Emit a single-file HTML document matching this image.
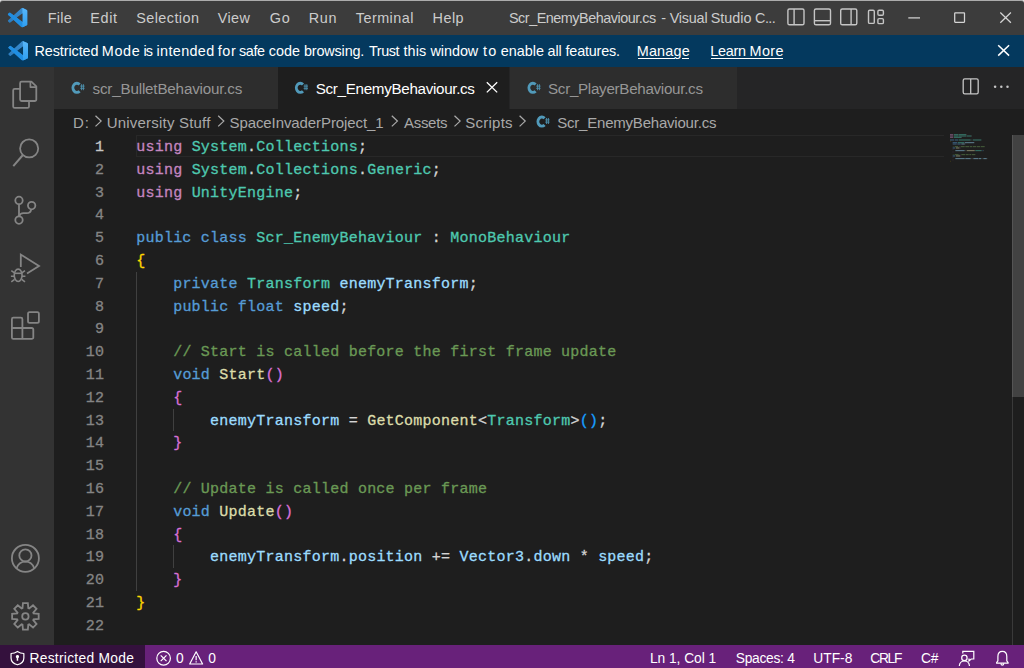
<!DOCTYPE html><html><head><meta charset="utf-8"><title>VS Code</title>
<style>
*{margin:0;padding:0;box-sizing:border-box}
html,body{width:1024px;height:668px;overflow:hidden;background:#1e1e1e}
body{position:relative;font-family:"Liberation Sans",sans-serif}
.a{position:absolute}
.t{position:absolute;white-space:pre;font-family:"Liberation Sans",sans-serif}
.c{position:absolute;white-space:pre;font-family:"Liberation Mono",monospace;color:#d4d4d4;-webkit-text-stroke:0.3px}
.c i{font-style:normal}
svg{position:absolute;overflow:visible}

</style></head><body>
<!-- title bar -->
<div class="a" style="left:0;top:0;width:1024px;height:4px;background:#e4e4e4"></div>
<div class="a" style="left:0;top:0;width:1024px;height:35.3px;background:#3c3c3c;border-top:1px solid #acacac;border-radius:3px 3px 0 0"></div>
<!-- banner -->
<div class="a" style="left:0;top:35.3px;width:1024px;height:31.3px;background:#04395e"></div>
<!-- activity bar -->
<div class="a" style="left:0;top:66.6px;width:54px;height:578.2px;background:#333333"></div>
<!-- tab strip -->
<div class="a" style="left:54px;top:66.6px;width:970px;height:42.2px;background:#252526"></div>
<div class="a" style="left:54px;top:66.6px;width:223.5px;height:42.2px;background:#2d2d2d"></div>
<div class="a" style="left:278.2px;top:66.6px;width:231.3px;height:42.2px;background:#1e1e1e"></div>
<div class="a" style="left:510.2px;top:66.6px;width:226.8px;height:42.2px;background:#2d2d2d"></div>
<!-- current line highlight -->
<div class="a" style="left:136.2px;top:135.2px;width:808px;height:22px;border:1.8px solid #282828;border-right:0"></div>
<!-- indent guides -->
<div class="a" style="left:136.2px;top:271.8px;width:1px;height:319.2px;background:#404040"></div>
<div class="a" style="left:173.2px;top:408.6px;width:1px;height:22.8px;background:#404040"></div>
<div class="a" style="left:173.2px;top:545.4px;width:1px;height:22.8px;background:#404040"></div>
<!-- scrollbar -->
<div class="a" style="left:1012.2px;top:134.8px;width:11.8px;height:262.4px;background:#424242"></div>
<div class="a" style="left:1012px;top:134.8px;width:1px;height:510px;background:rgba(127,127,127,0.3)"></div>
<!-- status bar -->
<div class="a" style="left:0;top:644.8px;width:1024px;height:23.2px;background:#68217a"></div>
<div class="a" style="left:0;top:644.8px;width:145px;height:23.2px;background:#34113d"></div>
<!-- underlines -->
<div class="a" style="left:638px;top:57.8px;width:36.6px;height:1.3px;background:#fff"></div>
<div class="a" style="left:681.6px;top:57.8px;width:7.4px;height:1.3px;background:#fff"></div>
<div class="a" style="left:711.4px;top:57.8px;width:71.6px;height:1.3px;background:#fff"></div>

<svg width="1024" height="668" viewBox="0 0 1024 668" style="left:0;top:0">
<g transform="translate(7.90 7.80) scale(0.8167)"><defs><clipPath id="g1c"><path d="M23.15 2.587L18.21.21a1.494 1.494 0 0 0-1.705.29l-9.46 8.63-4.12-3.128a.999.999 0 0 0-1.276.057L.327 7.261A1 1 0 0 0 .326 8.74L3.899 12 .326 15.26a1 1 0 0 0 .001 1.479L1.65 17.94a.999.999 0 0 0 1.276.057l4.12-3.128 9.46 8.63a1.492 1.492 0 0 0 1.704.29l4.942-2.377A1.5 1.5 0 0 0 24 20.06V3.939a1.5 1.5 0 0 0-.85-1.352zm-5.146 14.861L10.826 12l7.178-5.448v10.896z"/></clipPath><linearGradient id="g1w" x1="0" y1="0" x2="0" y2="1"><stop offset="0" stop-color="#5ab8fb"/><stop offset="1" stop-color="#2c9df0"/></linearGradient><linearGradient id="g1d" x1="1" y1="0" x2="0" y2="1"><stop offset="0" stop-color="#3a8ed2"/><stop offset="1" stop-color="#2a78b8"/></linearGradient></defs><g clip-path="url(#g1c)"><rect x="-1" y="-1" width="26" height="26" fill="url(#g1d)"/><path fill="#1f8ee2" d="M-0.5 7.6L1.4 6.0L2.9 5.7L18.4 17.6V25H16.6L3.9 12L-0.5 8.9Z"/><path fill="url(#g1w)" d="M17.75 -1H25V25H17.75Z"/></g></g>
<g transform="translate(8.40 41.00) scale(0.8167)"><defs><clipPath id="g2c"><path d="M23.15 2.587L18.21.21a1.494 1.494 0 0 0-1.705.29l-9.46 8.63-4.12-3.128a.999.999 0 0 0-1.276.057L.327 7.261A1 1 0 0 0 .326 8.74L3.899 12 .326 15.26a1 1 0 0 0 .001 1.479L1.65 17.94a.999.999 0 0 0 1.276.057l4.12-3.128 9.46 8.63a1.492 1.492 0 0 0 1.704.29l4.942-2.377A1.5 1.5 0 0 0 24 20.06V3.939a1.5 1.5 0 0 0-.85-1.352zm-5.146 14.861L10.826 12l7.178-5.448v10.896z"/></clipPath><linearGradient id="g2w" x1="0" y1="0" x2="0" y2="1"><stop offset="0" stop-color="#5ab8fb"/><stop offset="1" stop-color="#2c9df0"/></linearGradient><linearGradient id="g2d" x1="1" y1="0" x2="0" y2="1"><stop offset="0" stop-color="#3a8ed2"/><stop offset="1" stop-color="#2a78b8"/></linearGradient></defs><g clip-path="url(#g2c)"><rect x="-1" y="-1" width="26" height="26" fill="url(#g2d)"/><path fill="#1f8ee2" d="M-0.5 7.6L1.4 6.0L2.9 5.7L18.4 17.6V25H16.6L3.9 12L-0.5 8.9Z"/><path fill="url(#g2w)" d="M17.75 -1H25V25H17.75Z"/></g></g>
<g fill="none" stroke="#c5c5c5" stroke-width="1.4">
<rect x="787.9" y="9" width="16.1" height="15.8" rx="1.6"/><path d="M794.1 9v15.8"/>
<rect x="814.4" y="9" width="16.1" height="15.8" rx="1.6"/><path d="M814.4 20.7h16.1"/>
<rect x="840.7" y="9" width="16.1" height="15.8" rx="1.6"/><path d="M851.1 9v15.8"/>
<rect x="868.5" y="10.2" width="5.8" height="13.2" rx="1.2"/><rect x="877.9" y="10.2" width="5.5" height="5" rx="1.2"/><rect x="877.9" y="18.6" width="5.5" height="5" rx="1.2"/>
</g>
<g fill="none" stroke="#d4d4d4" stroke-width="1.25">
<path d="M908.3 17.9h11.7"/>
<rect x="954.7" y="12.8" width="9.8" height="9.5" rx="0.5"/>
<path d="M1000.3 12.5l10.6 10.3M1010.9 12.5l-10.6 10.3"/>
</g>
<path d="M998.2 45.3l10.9 10.3M1009.1 45.3l-10.9 10.3" fill="none" stroke="#ffffff" stroke-width="1.5"/>
<g fill="none" stroke="#858585" stroke-width="1.8" stroke-linejoin="round">
<path d="M21.6 81.7H31.4L36.3 86.4V99.5a1.5 1.5 0 0 1 -1.5 1.5H21.6a1.5 1.5 0 0 1 -1.5 -1.5V83.2a1.5 1.5 0 0 1 1.5 -1.5Z"/>
<path d="M30.4 82v5.1h5.6" stroke-width="1.7"/>
<path d="M20.1 88.8H14.7a1.5 1.5 0 0 0 -1.5 1.5V106.4a1.5 1.5 0 0 0 1.5 1.5H27.5a1.5 1.5 0 0 0 1.5 -1.5V101"/>
<circle cx="29.15" cy="148.4" r="9.05"/><path d="M22.9 155l-9.6 11.1" stroke-width="2"/>
<circle cx="19" cy="200.4" r="3.7"/><circle cx="19" cy="220.1" r="3.7"/><circle cx="31.65" cy="205.6" r="3.7"/>
<path d="M19 204.1V216.4"/><path d="M31.2 209.3c-0.4 2.6 -2.2 3.9 -4.6 3.9H23.5c-2.2 0 -3.7 1 -4.3 3"/>
<path d="M20.8 267V254.6L39 266.1L27 273.6" stroke-linejoin="miter" stroke-width="1.8"/>
<g stroke-width="1.6"><ellipse cx="18.15" cy="275.3" rx="3.9" ry="6.2"/><path d="M14.6 273.3h7.1"/>
<path d="M11.3 270.6l3.2 2.2M10.9 276.3h3.5M11.3 281.9l3.3 -2.5M25 270.6l-3.2 2.2M25.4 276.3h-3.5M25 281.9l-3.3 -2.5"/></g>
<path d="M13.4 317.7H20.9a1.5 1.5 0 0 1 1.5 1.5V328H31.8a1.5 1.5 0 0 1 1.5 1.5V337.4a1.5 1.5 0 0 1 -1.5 1.5H13.4a1.5 1.5 0 0 1 -1.5 -1.5V319.2a1.5 1.5 0 0 1 1.5 -1.5ZM22.4 328V338.9M11.9 328H22.4"/>
<rect x="28" y="312.2" width="10.9" height="10.6" rx="1.6"/>
<circle cx="25.4" cy="558.3" r="13.5"/><circle cx="25.4" cy="555.4" r="6.1"/>
<path d="M16.6 568.2c1.4 -4 4.8 -6.6 8.8 -6.6s7.4 2.6 8.8 6.6"/>
<path d="M22.50 608.20 L22.94 603.13 L27.86 603.13 L28.30 608.20 L29.15 608.55 L33.05 605.27 L36.53 608.75 L33.25 612.65 L33.60 613.50 L38.67 613.94 L38.67 618.86 L33.60 619.30 L33.25 620.15 L36.53 624.05 L33.05 627.53 L29.15 624.25 L28.30 624.60 L27.86 629.67 L22.94 629.67 L22.50 624.60 L21.65 624.25 L17.75 627.53 L14.27 624.05 L17.55 620.15 L17.20 619.30 L12.13 618.86 L12.13 613.94 L17.20 613.50 L17.55 612.65 L14.27 608.75 L17.75 605.27 L21.65 608.55Z" stroke-linejoin="miter"/><circle cx="25.4" cy="616.4" r="3.2"/>
</g>
<path d="M79.60 84.40 A4.0 4.55 0 1 0 79.60 91.20" fill="none" stroke="#519aba" stroke-width="2.9"/><g stroke="#519aba" stroke-width="0.9" opacity="0.95"><path d="M81.60 84.20 v6 M83.40 84.20 v6 M80.20 86.10 h4.4 M80.20 88.30 h4.4"/></g>
<path d="M303.00 84.40 A4.0 4.55 0 1 0 303.00 91.20" fill="none" stroke="#519aba" stroke-width="2.9"/><g stroke="#519aba" stroke-width="0.9" opacity="0.95"><path d="M305.00 84.20 v6 M306.80 84.20 v6 M303.60 86.10 h4.4 M303.60 88.30 h4.4"/></g>
<path d="M535.60 84.40 A4.0 4.55 0 1 0 535.60 91.20" fill="none" stroke="#519aba" stroke-width="2.9"/><g stroke="#519aba" stroke-width="0.9" opacity="0.95"><path d="M537.60 84.20 v6 M539.40 84.20 v6 M536.20 86.10 h4.4 M536.20 88.30 h4.4"/></g>
<path d="M544.60 118.20 A4.0 4.55 0 1 0 544.60 125.00" fill="none" stroke="#519aba" stroke-width="2.9"/><g stroke="#519aba" stroke-width="0.9" opacity="0.95"><path d="M546.60 118.00 v6 M548.40 118.00 v6 M545.20 119.90 h4.4 M545.20 122.10 h4.4"/></g>
<path d="M486.8 82.2l10.4 10.2M497.2 82.2l-10.4 10.2" fill="none" stroke="#ffffff" stroke-width="1.3"/>
<g fill="none" stroke="#c5c5c5" stroke-width="1.3"><rect x="963.2" y="78.9" width="15" height="15" rx="1.6"/><path d="M970.7 78.9v15"/></g>
<g fill="#c5c5c5"><circle cx="995.1" cy="86.8" r="1.25"/><circle cx="1001.3" cy="86.8" r="1.25"/><circle cx="1007.5" cy="86.8" r="1.25"/></g>
<path d="M95.50 115.80 l5.6 5.3 l-5.6 5.3" fill="none" stroke="#a9a9a9" stroke-width="1.25"/>
<path d="M218.20 115.80 l5.6 5.3 l-5.6 5.3" fill="none" stroke="#a9a9a9" stroke-width="1.25"/>
<path d="M391.80 115.80 l5.6 5.3 l-5.6 5.3" fill="none" stroke="#a9a9a9" stroke-width="1.25"/>
<path d="M454.50 115.80 l5.6 5.3 l-5.6 5.3" fill="none" stroke="#a9a9a9" stroke-width="1.25"/>
<path d="M519.60 115.80 l5.6 5.3 l-5.6 5.3" fill="none" stroke="#a9a9a9" stroke-width="1.25"/>
<g fill="none" stroke="#ffffff" stroke-width="1.2" stroke-linejoin="round">
<path d="M17.45 651.4c-1.9 1.3 -4 2 -6.4 2.1v4.4c0 3.4 2.4 5.7 6.4 6.9c4 -1.2 6.4 -3.5 6.4 -6.9v-4.4c-2.4 -0.1 -4.5 -0.8 -6.4 -2.1Z"/>
</g>
<path d="M17.45 655a1.7 1.7 0 0 1 0.75 3.2v2.6h-1.5v-2.6a1.7 1.7 0 0 1 0.75 -3.2Z" fill="#fff"/>
<g fill="none" stroke="#ffffff" stroke-width="1.2">
<circle cx="163.6" cy="658.25" r="6.8"/><path d="M160.7 655.3l5.8 5.9M166.5 655.3l-5.8 5.9"/>
<path d="M196.15 651.8L202.6 664H189.7Z" stroke-linejoin="round"/><path d="M196.15 656v4.3M196.15 661.3v1.3"/>
<circle cx="964.4" cy="657.9" r="2.7"/><path d="M959.3 666c0.3 -3.2 2.2 -5 5.1 -5s4.8 1.8 5.1 5"/>
<path d="M962.8 653.6V651.4h11v7.6h-2.6l-2.2 2v-2h-0.6" stroke-linejoin="miter"/>
<path d="M996.6 663.2h11.5v-0.7l-1.3 -1.7v-4.2c0 -3.1 -1.9 -5.2 -4.45 -5.2s-4.45 2.1 -4.45 5.2v4.2l-1.3 1.7Z" stroke-linejoin="round"/><path d="M1000.9 663.4c0.1 1.2 0.6 1.8 1.45 1.8s1.35 -0.6 1.45 -1.8"/>
</g>
</svg>
<div class="a" style="left:0;top:0;opacity:0.5"><svg width="80" height="40" viewBox="0 0 80 40" style="left:949.8px;top:134.4px" shape-rendering="auto"><rect x="0.00" y="0.15" width="3.33" height="1.05" fill="#c586c0"/><rect x="4.00" y="0.15" width="4.00" height="1.05" fill="#4ec9b0"/><rect x="8.00" y="0.15" width="0.67" height="1.05" fill="#d4d4d4" opacity="0.4"/><rect x="8.67" y="0.15" width="7.34" height="1.05" fill="#4ec9b0"/><rect x="16.01" y="0.15" width="0.67" height="1.05" fill="#d4d4d4" opacity="0.4"/><rect x="0.00" y="1.48" width="3.33" height="1.05" fill="#c586c0"/><rect x="4.00" y="1.48" width="4.00" height="1.05" fill="#4ec9b0"/><rect x="8.00" y="1.48" width="0.67" height="1.05" fill="#d4d4d4" opacity="0.4"/><rect x="8.67" y="1.48" width="7.34" height="1.05" fill="#4ec9b0"/><rect x="16.01" y="1.48" width="0.67" height="1.05" fill="#d4d4d4" opacity="0.4"/><rect x="16.68" y="1.48" width="4.67" height="1.05" fill="#4ec9b0"/><rect x="21.34" y="1.48" width="0.67" height="1.05" fill="#d4d4d4" opacity="0.4"/><rect x="0.00" y="2.81" width="3.33" height="1.05" fill="#c586c0"/><rect x="4.00" y="2.81" width="7.34" height="1.05" fill="#4ec9b0"/><rect x="11.34" y="2.81" width="0.67" height="1.05" fill="#d4d4d4" opacity="0.4"/><rect x="0.00" y="5.47" width="4.00" height="1.05" fill="#569cd6"/><rect x="4.67" y="5.47" width="3.33" height="1.05" fill="#569cd6"/><rect x="8.67" y="5.47" width="12.01" height="1.05" fill="#4ec9b0"/><rect x="21.34" y="5.47" width="0.67" height="1.05" fill="#d4d4d4" opacity="0.4"/><rect x="22.68" y="5.47" width="8.67" height="1.05" fill="#4ec9b0"/><rect x="0.00" y="6.80" width="0.67" height="1.05" fill="#ffd700" opacity="0.4"/><rect x="2.67" y="8.13" width="4.67" height="1.05" fill="#569cd6"/><rect x="8.00" y="8.13" width="6.00" height="1.05" fill="#4ec9b0"/><rect x="14.67" y="8.13" width="9.34" height="1.05" fill="#9cdcfe"/><rect x="24.01" y="8.13" width="0.67" height="1.05" fill="#d4d4d4" opacity="0.4"/><rect x="2.67" y="9.46" width="4.00" height="1.05" fill="#569cd6"/><rect x="7.34" y="9.46" width="3.33" height="1.05" fill="#569cd6"/><rect x="11.34" y="9.46" width="3.33" height="1.05" fill="#9cdcfe"/><rect x="14.67" y="9.46" width="0.67" height="1.05" fill="#d4d4d4" opacity="0.4"/><rect x="2.67" y="12.12" width="1.33" height="1.05" fill="#6a9955" opacity="0.4"/><rect x="4.67" y="12.12" width="3.33" height="1.05" fill="#6a9955"/><rect x="8.67" y="12.12" width="1.33" height="1.05" fill="#6a9955" opacity="0.4"/><rect x="10.67" y="12.12" width="4.00" height="1.05" fill="#6a9955"/><rect x="15.34" y="12.12" width="4.00" height="1.05" fill="#6a9955"/><rect x="20.01" y="12.12" width="2.00" height="1.05" fill="#6a9955"/><rect x="22.68" y="12.12" width="3.33" height="1.05" fill="#6a9955"/><rect x="26.68" y="12.12" width="3.33" height="1.05" fill="#6a9955"/><rect x="30.68" y="12.12" width="4.00" height="1.05" fill="#6a9955"/><rect x="2.67" y="13.45" width="2.67" height="1.05" fill="#569cd6"/><rect x="6.00" y="13.45" width="3.33" height="1.05" fill="#dcdcaa"/><rect x="9.34" y="13.45" width="1.33" height="1.05" fill="#da70d6" opacity="0.4"/><rect x="2.67" y="14.78" width="0.67" height="1.05" fill="#da70d6" opacity="0.4"/><rect x="5.34" y="16.11" width="9.34" height="1.05" fill="#9cdcfe"/><rect x="15.34" y="16.11" width="0.67" height="1.05" fill="#d4d4d4" opacity="0.4"/><rect x="16.68" y="16.11" width="8.00" height="1.05" fill="#dcdcaa"/><rect x="24.68" y="16.11" width="0.67" height="1.05" fill="#d4d4d4" opacity="0.4"/><rect x="25.35" y="16.11" width="6.00" height="1.05" fill="#4ec9b0"/><rect x="31.35" y="16.11" width="0.67" height="1.05" fill="#d4d4d4" opacity="0.4"/><rect x="32.02" y="16.11" width="1.33" height="1.05" fill="#179fff" opacity="0.4"/><rect x="33.35" y="16.11" width="0.67" height="1.05" fill="#d4d4d4" opacity="0.4"/><rect x="2.67" y="17.44" width="0.67" height="1.05" fill="#da70d6" opacity="0.4"/><rect x="2.67" y="20.10" width="1.33" height="1.05" fill="#6a9955" opacity="0.4"/><rect x="4.67" y="20.10" width="4.00" height="1.05" fill="#6a9955"/><rect x="9.34" y="20.10" width="1.33" height="1.05" fill="#6a9955" opacity="0.4"/><rect x="11.34" y="20.10" width="4.00" height="1.05" fill="#6a9955"/><rect x="16.01" y="20.10" width="2.67" height="1.05" fill="#6a9955"/><rect x="19.34" y="20.10" width="2.00" height="1.05" fill="#6a9955"/><rect x="22.01" y="20.10" width="3.33" height="1.05" fill="#6a9955"/><rect x="2.67" y="21.43" width="2.67" height="1.05" fill="#569cd6"/><rect x="6.00" y="21.43" width="4.00" height="1.05" fill="#dcdcaa"/><rect x="10.01" y="21.43" width="1.33" height="1.05" fill="#da70d6" opacity="0.4"/><rect x="2.67" y="22.76" width="0.67" height="1.05" fill="#da70d6" opacity="0.4"/><rect x="5.34" y="24.09" width="9.34" height="1.05" fill="#9cdcfe"/><rect x="14.67" y="24.09" width="0.67" height="1.05" fill="#d4d4d4" opacity="0.4"/><rect x="15.34" y="24.09" width="5.34" height="1.05" fill="#9cdcfe"/><rect x="21.34" y="24.09" width="1.33" height="1.05" fill="#d4d4d4" opacity="0.4"/><rect x="23.35" y="24.09" width="4.67" height="1.05" fill="#9cdcfe"/><rect x="28.01" y="24.09" width="0.67" height="1.05" fill="#d4d4d4" opacity="0.4"/><rect x="28.68" y="24.09" width="2.67" height="1.05" fill="#9cdcfe"/><rect x="32.02" y="24.09" width="0.67" height="1.05" fill="#d4d4d4" opacity="0.4"/><rect x="33.35" y="24.09" width="3.33" height="1.05" fill="#9cdcfe"/><rect x="36.69" y="24.09" width="0.67" height="1.05" fill="#d4d4d4" opacity="0.4"/><rect x="2.67" y="25.42" width="0.67" height="1.05" fill="#da70d6" opacity="0.4"/><rect x="0.00" y="26.75" width="0.67" height="1.05" fill="#ffd700" opacity="0.4"/></svg></div>
<span class="t" id="t0" style="left:47.75px;top:11.11px;font-size:14.4px;line-height:14.4px;color:#cccccc;letter-spacing:0.250px;">File</span>
<span class="t" id="t1" style="left:90.25px;top:11.11px;font-size:14.4px;line-height:14.4px;color:#cccccc;letter-spacing:0.667px;">Edit</span>
<span class="t" id="t2" style="left:136.25px;top:11.11px;font-size:14.4px;line-height:14.4px;color:#cccccc;letter-spacing:0.438px;">Selection</span>
<span class="t" id="t3" style="left:217.75px;top:11.11px;font-size:14.4px;line-height:14.4px;color:#cccccc;letter-spacing:0.417px;">View</span>
<span class="t" id="t4" style="left:269.75px;top:11.11px;font-size:14.4px;line-height:14.4px;color:#cccccc;letter-spacing:0.750px;">Go</span>
<span class="t" id="t5" style="left:308.75px;top:11.11px;font-size:14.4px;line-height:14.4px;color:#cccccc;letter-spacing:0.625px;">Run</span>
<span class="t" id="t6" style="left:355.75px;top:11.11px;font-size:14.4px;line-height:14.4px;color:#cccccc;letter-spacing:0.464px;">Terminal</span>
<span class="t" id="t7" style="left:432.50px;top:11.11px;font-size:14.4px;line-height:14.4px;color:#cccccc;letter-spacing:0.500px;">Help</span>
<span class="t" id="t8" style="left:509.00px;top:11.11px;font-size:14.4px;line-height:14.4px;color:#cccccc;letter-spacing:-0.478px;">Scr_EnemyBehaviour.cs</span>
<span class="t" id="t9" style="left:661.30px;top:11.11px;font-size:14.4px;line-height:14.4px;color:#cccccc;letter-spacing:0.000px;">-</span>
<span class="t" id="t10" style="left:669.75px;top:11.11px;font-size:14.4px;line-height:14.4px;color:#cccccc;letter-spacing:-0.220px;">Visual</span>
<span class="t" id="t11" style="left:710.75px;top:11.11px;font-size:14.4px;line-height:14.4px;color:#cccccc;letter-spacing:0.000px;">Studio</span>
<span class="t" id="t12" style="left:755.00px;top:11.11px;font-size:14.4px;line-height:14.4px;color:#cccccc;letter-spacing:-0.517px;">C...</span>
<span class="t" id="t13" style="left:34.50px;top:44.21px;font-size:14.4px;line-height:14.4px;color:#ffffff;letter-spacing:-0.083px;">Restricted</span>
<span class="t" id="t14" style="left:101.75px;top:44.21px;font-size:14.4px;line-height:14.4px;color:#ffffff;letter-spacing:0.667px;">Mode</span>
<span class="t" id="t15" style="left:143.50px;top:44.21px;font-size:14.4px;line-height:14.4px;color:#ffffff;letter-spacing:-1.000px;">is</span>
<span class="t" id="t16" style="left:156.50px;top:44.21px;font-size:14.4px;line-height:14.4px;color:#ffffff;letter-spacing:0.357px;">intended</span>
<span class="t" id="t17" style="left:217.75px;top:44.21px;font-size:14.4px;line-height:14.4px;color:#ffffff;letter-spacing:0.625px;">for</span>
<span class="t" id="t18" style="left:239.00px;top:44.21px;font-size:14.4px;line-height:14.4px;color:#ffffff;letter-spacing:-0.383px;">safe</span>
<span class="t" id="t19" style="left:268.75px;top:44.21px;font-size:14.4px;line-height:14.4px;color:#ffffff;letter-spacing:0.000px;">code</span>
<span class="t" id="t20" style="left:304.00px;top:44.21px;font-size:14.4px;line-height:14.4px;color:#ffffff;letter-spacing:-0.156px;">browsing.</span>
<span class="t" id="t21" style="left:369.00px;top:44.21px;font-size:14.4px;line-height:14.4px;color:#ffffff;letter-spacing:-0.438px;">Trust</span>
<span class="t" id="t22" style="left:403.50px;top:44.21px;font-size:14.4px;line-height:14.4px;color:#ffffff;letter-spacing:0.083px;">this</span>
<span class="t" id="t23" style="left:430.50px;top:44.21px;font-size:14.4px;line-height:14.4px;color:#ffffff;letter-spacing:-0.050px;">window</span>
<span class="t" id="t24" style="left:483.00px;top:44.21px;font-size:14.4px;line-height:14.4px;color:#ffffff;letter-spacing:1.250px;">to</span>
<span class="t" id="t25" style="left:500.75px;top:44.21px;font-size:14.4px;line-height:14.4px;color:#ffffff;letter-spacing:0.000px;">enable</span>
<span class="t" id="t26" style="left:547.50px;top:44.21px;font-size:14.4px;line-height:14.4px;color:#ffffff;letter-spacing:-0.125px;">all</span>
<span class="t" id="t27" style="left:565.50px;top:44.21px;font-size:14.4px;line-height:14.4px;color:#ffffff;letter-spacing:-0.188px;">features.</span>
<span class="t" id="t28" style="left:636.75px;top:44.21px;font-size:14.4px;line-height:14.4px;color:#ffffff;letter-spacing:0.180px;">Manage</span>
<span class="t" id="t29" style="left:710.25px;top:44.21px;font-size:14.4px;line-height:14.4px;color:#ffffff;letter-spacing:-0.275px;">Learn</span>
<span class="t" id="t30" style="left:749.50px;top:44.21px;font-size:14.4px;line-height:14.4px;color:#ffffff;letter-spacing:0.400px;">More</span>
<span class="t" id="t31" style="left:92.50px;top:80.53px;font-size:15.2px;line-height:15.2px;color:#969696;letter-spacing:-0.179px;">scr_BulletBehaviour.cs</span>
<span class="t" id="t32" style="left:315.75px;top:80.53px;font-size:15.2px;line-height:15.2px;color:#ffffff;letter-spacing:-0.312px;">Scr_EnemyBehaviour.cs</span>
<span class="t" id="t33" style="left:548.00px;top:80.53px;font-size:15.2px;line-height:15.2px;color:#969696;letter-spacing:-0.298px;">Scr_PlayerBehaviour.cs</span>
<span class="t" id="t34" style="left:73.00px;top:114.90px;font-size:15px;line-height:15px;color:#a9a9a9;letter-spacing:1.000px;">D:</span>
<span class="t" id="t35" style="left:106.75px;top:114.90px;font-size:15px;line-height:15px;color:#a9a9a9;letter-spacing:0.200px;">University Stuff</span>
<span class="t" id="t36" style="left:229.50px;top:114.90px;font-size:15px;line-height:15px;color:#a9a9a9;letter-spacing:-0.087px;">SpaceInvaderProject_1</span>
<span class="t" id="t37" style="left:404.00px;top:114.90px;font-size:15px;line-height:15px;color:#a9a9a9;letter-spacing:-0.300px;">Assets</span>
<span class="t" id="t38" style="left:465.25px;top:114.90px;font-size:15px;line-height:15px;color:#a9a9a9;letter-spacing:0.250px;">Scripts</span>
<span class="t" id="t39" style="left:557.25px;top:114.90px;font-size:15px;line-height:15px;color:#a9a9a9;letter-spacing:-0.212px;">Scr_EnemyBehaviour.cs</span>
<span class="t" id="t40" style="left:29.50px;top:651.62px;font-size:13.8px;line-height:13.8px;color:#ffffff;letter-spacing:0.275px;">Restricted Mode</span>
<span class="t" id="t41" style="left:175.88px;top:651.62px;font-size:13.8px;line-height:13.8px;color:#ffffff;letter-spacing:0.000px;">0</span>
<span class="t" id="t42" style="left:208.25px;top:651.62px;font-size:13.8px;line-height:13.8px;color:#ffffff;letter-spacing:0.000px;">0</span>
<span class="t" id="t43" style="left:650.00px;top:651.62px;font-size:13.8px;line-height:13.8px;color:#ffffff;letter-spacing:-0.060px;">Ln 1, Col 1</span>
<span class="t" id="t44" style="left:735.75px;top:651.62px;font-size:13.8px;line-height:13.8px;color:#ffffff;letter-spacing:-0.281px;">Spaces: 4</span>
<span class="t" id="t45" style="left:813.25px;top:651.62px;font-size:13.8px;line-height:13.8px;color:#ffffff;letter-spacing:0.000px;">UTF-8</span>
<span class="t" id="t46" style="left:870.25px;top:651.62px;font-size:13.8px;line-height:13.8px;color:#ffffff;letter-spacing:-1.283px;">CRLF</span>
<span class="t" id="t47" style="left:921.00px;top:651.62px;font-size:13.8px;line-height:13.8px;color:#ffffff;letter-spacing:-0.150px;">C#</span>
<span class="c" style="left:95.06px;top:140.00px;font-size:15.0px;line-height:15.0px;letter-spacing:0.236px;color:#c6c6c6">1</span>
<span class="c" style="left:136.20px;top:140.00px;font-size:15.0px;line-height:15.0px;letter-spacing:0.236px"><i style="color:#c586c0">using</i><i style="color:#d4d4d4"> </i><i style="color:#4ec9b0">System</i><i style="color:#d4d4d4">.</i><i style="color:#4ec9b0">Collections</i><i style="color:#d4d4d4">;</i></span>
<span class="c" style="left:95.06px;top:162.80px;font-size:15.0px;line-height:15.0px;letter-spacing:0.236px;color:#858585">2</span>
<span class="c" style="left:136.20px;top:162.80px;font-size:15.0px;line-height:15.0px;letter-spacing:0.236px"><i style="color:#c586c0">using</i><i style="color:#d4d4d4"> </i><i style="color:#4ec9b0">System</i><i style="color:#d4d4d4">.</i><i style="color:#4ec9b0">Collections</i><i style="color:#d4d4d4">.</i><i style="color:#4ec9b0">Generic</i><i style="color:#d4d4d4">;</i></span>
<span class="c" style="left:95.06px;top:185.60px;font-size:15.0px;line-height:15.0px;letter-spacing:0.236px;color:#858585">3</span>
<span class="c" style="left:136.20px;top:185.60px;font-size:15.0px;line-height:15.0px;letter-spacing:0.236px"><i style="color:#c586c0">using</i><i style="color:#d4d4d4"> </i><i style="color:#4ec9b0">UnityEngine</i><i style="color:#d4d4d4">;</i></span>
<span class="c" style="left:95.06px;top:208.40px;font-size:15.0px;line-height:15.0px;letter-spacing:0.236px;color:#858585">4</span>
<span class="c" style="left:95.06px;top:231.20px;font-size:15.0px;line-height:15.0px;letter-spacing:0.236px;color:#858585">5</span>
<span class="c" style="left:136.20px;top:231.20px;font-size:15.0px;line-height:15.0px;letter-spacing:0.236px"><i style="color:#569cd6">public class </i><i style="color:#4ec9b0">Scr_EnemyBehaviour</i><i style="color:#d4d4d4"> : </i><i style="color:#4ec9b0">MonoBehaviour</i></span>
<span class="c" style="left:95.06px;top:254.00px;font-size:15.0px;line-height:15.0px;letter-spacing:0.236px;color:#858585">6</span>
<span class="c" style="left:136.20px;top:254.00px;font-size:15.0px;line-height:15.0px;letter-spacing:0.236px"><i style="color:#ffd700">{</i></span>
<span class="c" style="left:95.06px;top:276.80px;font-size:15.0px;line-height:15.0px;letter-spacing:0.236px;color:#858585">7</span>
<span class="c" style="left:136.20px;top:276.80px;font-size:15.0px;line-height:15.0px;letter-spacing:0.236px"><i style="color:#d4d4d4">    </i><i style="color:#569cd6">private </i><i style="color:#4ec9b0">Transform</i><i style="color:#d4d4d4"> </i><i style="color:#9cdcfe">enemyTransform</i><i style="color:#d4d4d4">;</i></span>
<span class="c" style="left:95.06px;top:299.60px;font-size:15.0px;line-height:15.0px;letter-spacing:0.236px;color:#858585">8</span>
<span class="c" style="left:136.20px;top:299.60px;font-size:15.0px;line-height:15.0px;letter-spacing:0.236px"><i style="color:#d4d4d4">    </i><i style="color:#569cd6">public float </i><i style="color:#9cdcfe">speed</i><i style="color:#d4d4d4">;</i></span>
<span class="c" style="left:95.06px;top:322.40px;font-size:15.0px;line-height:15.0px;letter-spacing:0.236px;color:#858585">9</span>
<span class="c" style="left:85.83px;top:345.20px;font-size:15.0px;line-height:15.0px;letter-spacing:0.236px;color:#858585">10</span>
<span class="c" style="left:136.20px;top:345.20px;font-size:15.0px;line-height:15.0px;letter-spacing:0.236px"><i style="color:#d4d4d4">    </i><i style="color:#6a9955">// Start is called before the first frame update</i></span>
<span class="c" style="left:85.83px;top:368.00px;font-size:15.0px;line-height:15.0px;letter-spacing:0.236px;color:#858585">11</span>
<span class="c" style="left:136.20px;top:368.00px;font-size:15.0px;line-height:15.0px;letter-spacing:0.236px"><i style="color:#d4d4d4">    </i><i style="color:#569cd6">void </i><i style="color:#dcdcaa">Start</i><i style="color:#da70d6">()</i></span>
<span class="c" style="left:85.83px;top:390.80px;font-size:15.0px;line-height:15.0px;letter-spacing:0.236px;color:#858585">12</span>
<span class="c" style="left:136.20px;top:390.80px;font-size:15.0px;line-height:15.0px;letter-spacing:0.236px"><i style="color:#d4d4d4">    </i><i style="color:#da70d6">{</i></span>
<span class="c" style="left:85.83px;top:413.60px;font-size:15.0px;line-height:15.0px;letter-spacing:0.236px;color:#858585">13</span>
<span class="c" style="left:136.20px;top:413.60px;font-size:15.0px;line-height:15.0px;letter-spacing:0.236px"><i style="color:#d4d4d4">        </i><i style="color:#9cdcfe">enemyTransform</i><i style="color:#d4d4d4"> = </i><i style="color:#dcdcaa">GetComponent</i><i style="color:#d4d4d4">&lt;</i><i style="color:#4ec9b0">Transform</i><i style="color:#d4d4d4">&gt;</i><i style="color:#179fff">()</i><i style="color:#d4d4d4">;</i></span>
<span class="c" style="left:85.83px;top:436.40px;font-size:15.0px;line-height:15.0px;letter-spacing:0.236px;color:#858585">14</span>
<span class="c" style="left:136.20px;top:436.40px;font-size:15.0px;line-height:15.0px;letter-spacing:0.236px"><i style="color:#d4d4d4">    </i><i style="color:#da70d6">}</i></span>
<span class="c" style="left:85.83px;top:459.20px;font-size:15.0px;line-height:15.0px;letter-spacing:0.236px;color:#858585">15</span>
<span class="c" style="left:85.83px;top:482.00px;font-size:15.0px;line-height:15.0px;letter-spacing:0.236px;color:#858585">16</span>
<span class="c" style="left:136.20px;top:482.00px;font-size:15.0px;line-height:15.0px;letter-spacing:0.236px"><i style="color:#d4d4d4">    </i><i style="color:#6a9955">// Update is called once per frame</i></span>
<span class="c" style="left:85.83px;top:504.80px;font-size:15.0px;line-height:15.0px;letter-spacing:0.236px;color:#858585">17</span>
<span class="c" style="left:136.20px;top:504.80px;font-size:15.0px;line-height:15.0px;letter-spacing:0.236px"><i style="color:#d4d4d4">    </i><i style="color:#569cd6">void </i><i style="color:#dcdcaa">Update</i><i style="color:#da70d6">()</i></span>
<span class="c" style="left:85.83px;top:527.60px;font-size:15.0px;line-height:15.0px;letter-spacing:0.236px;color:#858585">18</span>
<span class="c" style="left:136.20px;top:527.60px;font-size:15.0px;line-height:15.0px;letter-spacing:0.236px"><i style="color:#d4d4d4">    </i><i style="color:#da70d6">{</i></span>
<span class="c" style="left:85.83px;top:550.40px;font-size:15.0px;line-height:15.0px;letter-spacing:0.236px;color:#858585">19</span>
<span class="c" style="left:136.20px;top:550.40px;font-size:15.0px;line-height:15.0px;letter-spacing:0.236px"><i style="color:#d4d4d4">        </i><i style="color:#9cdcfe">enemyTransform</i><i style="color:#d4d4d4">.</i><i style="color:#9cdcfe">position</i><i style="color:#d4d4d4"> += </i><i style="color:#9cdcfe">Vector3</i><i style="color:#d4d4d4">.</i><i style="color:#9cdcfe">down</i><i style="color:#d4d4d4"> * </i><i style="color:#9cdcfe">speed</i><i style="color:#d4d4d4">;</i></span>
<span class="c" style="left:85.83px;top:573.20px;font-size:15.0px;line-height:15.0px;letter-spacing:0.236px;color:#858585">20</span>
<span class="c" style="left:136.20px;top:573.20px;font-size:15.0px;line-height:15.0px;letter-spacing:0.236px"><i style="color:#d4d4d4">    </i><i style="color:#da70d6">}</i></span>
<span class="c" style="left:85.83px;top:596.00px;font-size:15.0px;line-height:15.0px;letter-spacing:0.236px;color:#858585">21</span>
<span class="c" style="left:136.20px;top:596.00px;font-size:15.0px;line-height:15.0px;letter-spacing:0.236px"><i style="color:#ffd700">}</i></span>
<span class="c" style="left:85.83px;top:618.80px;font-size:15.0px;line-height:15.0px;letter-spacing:0.236px;color:#858585">22</span>
</body></html>
